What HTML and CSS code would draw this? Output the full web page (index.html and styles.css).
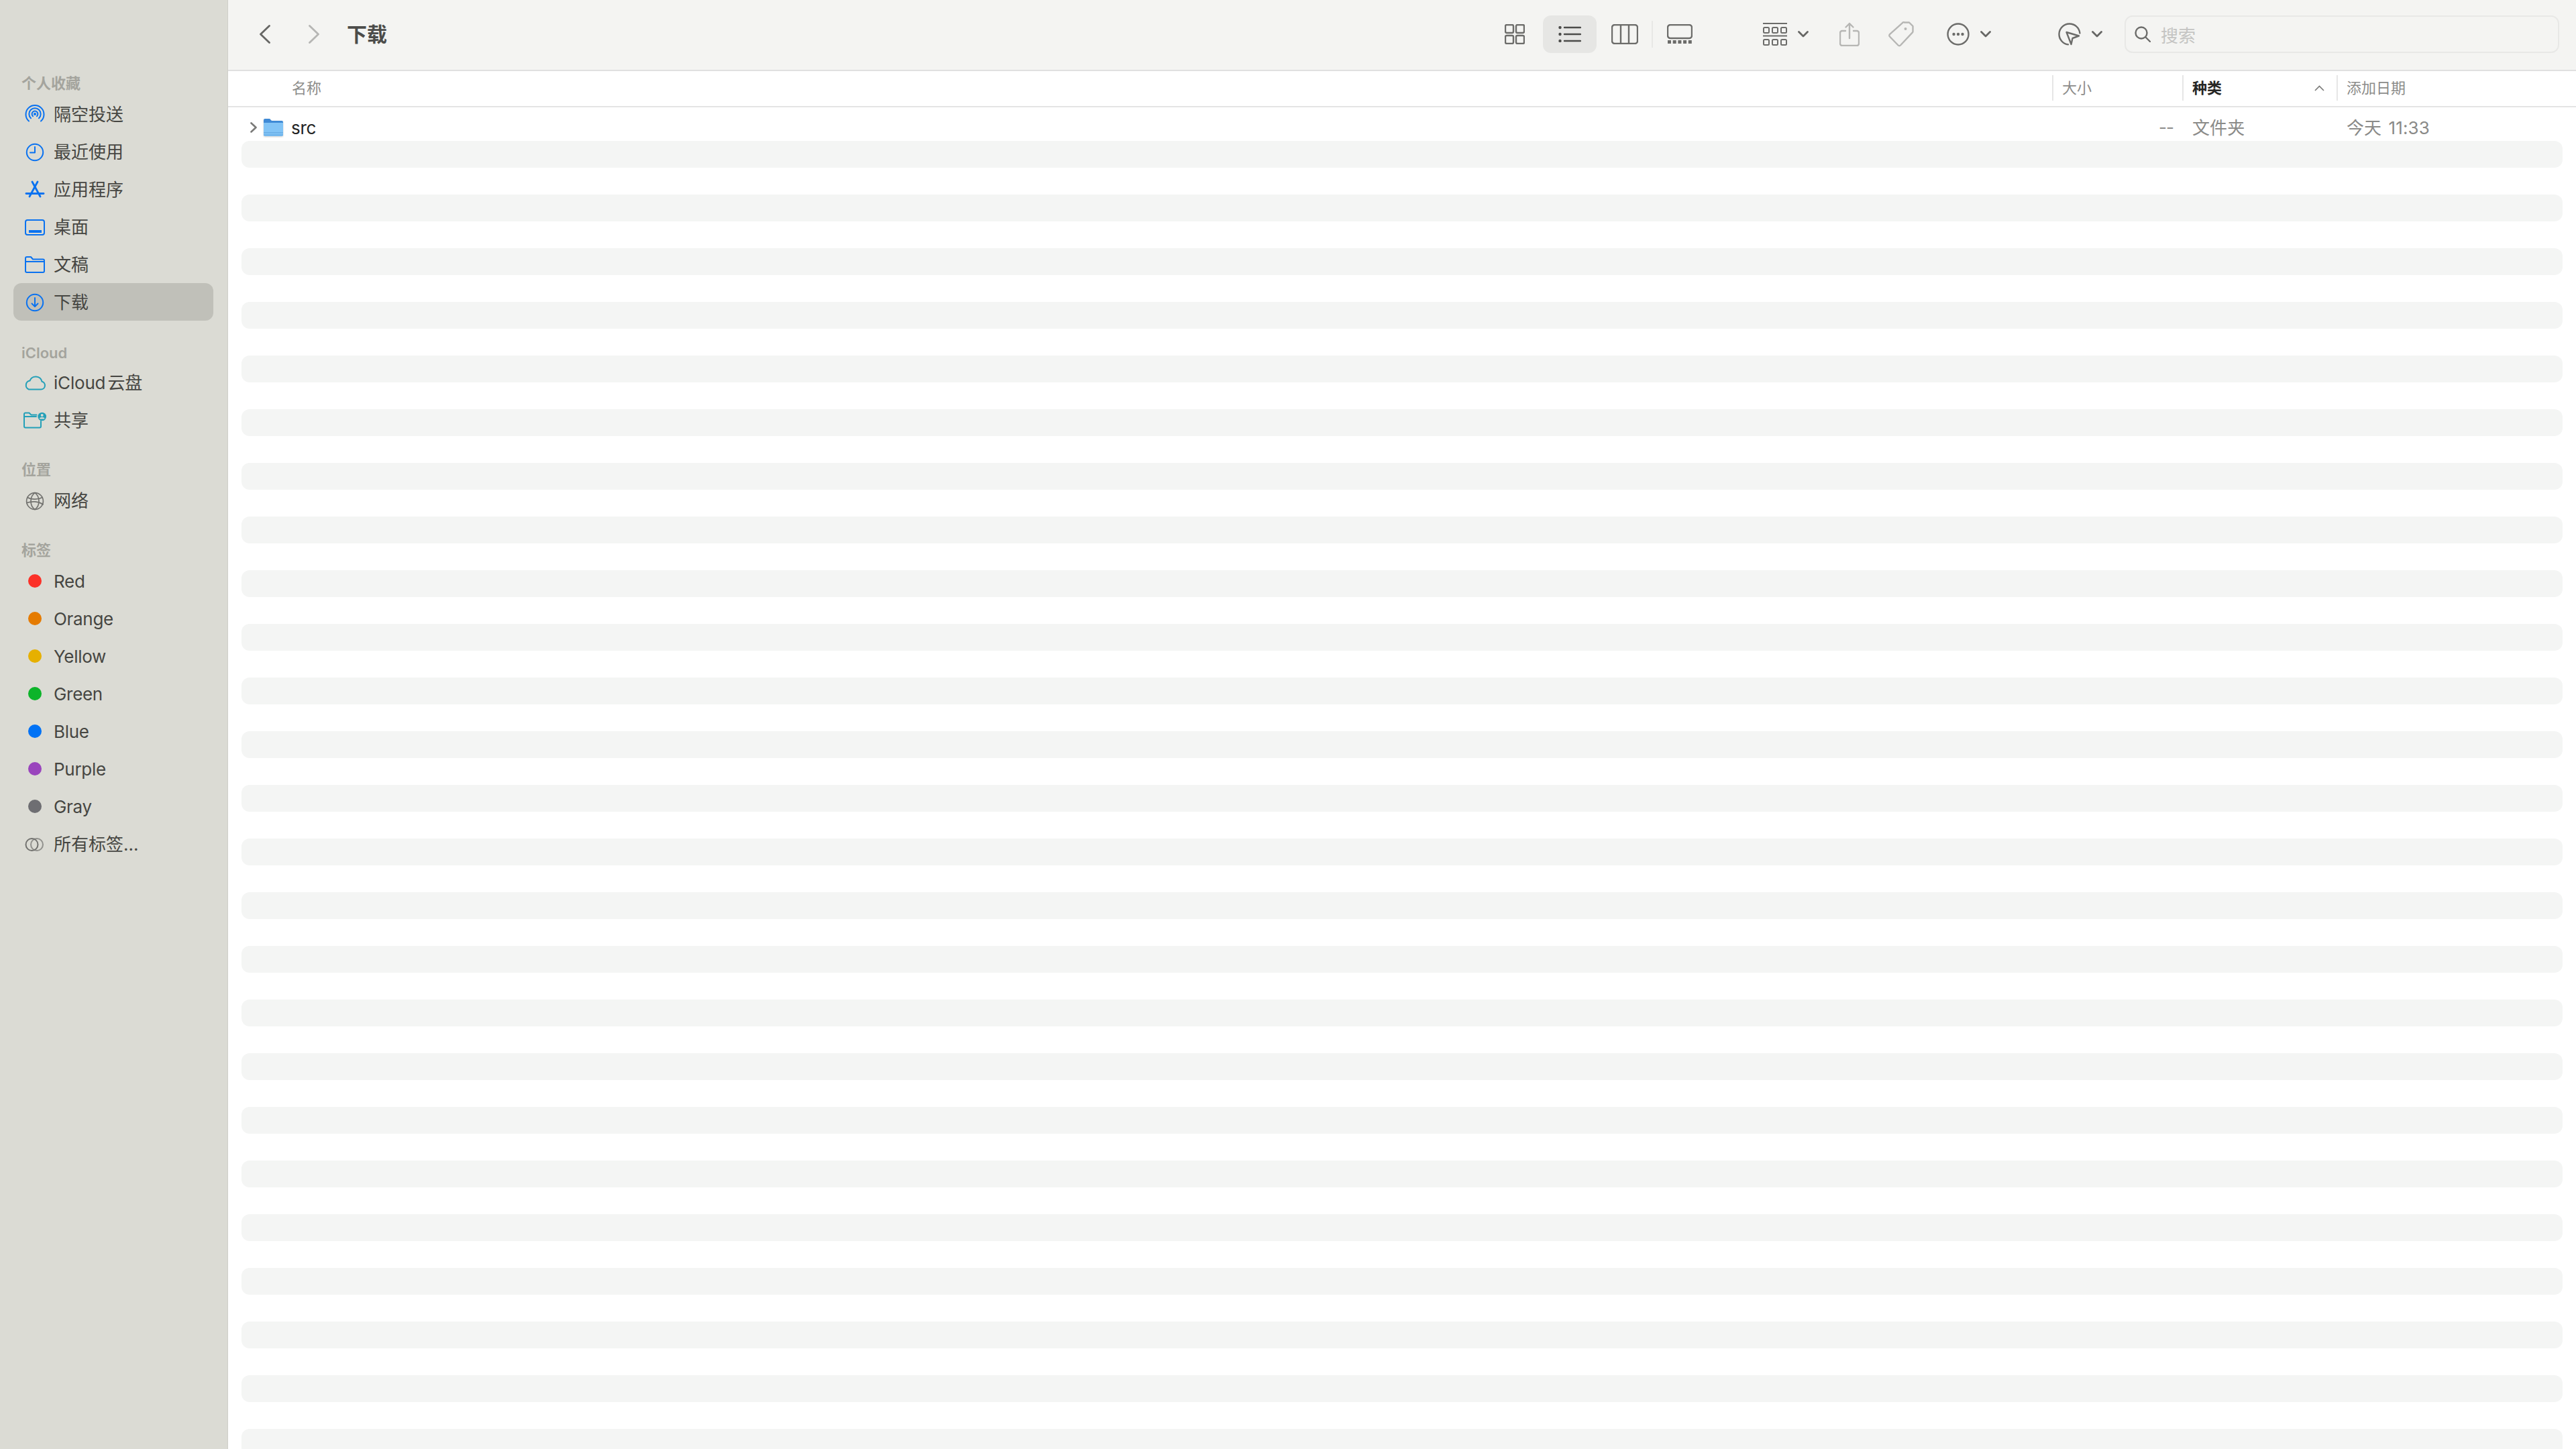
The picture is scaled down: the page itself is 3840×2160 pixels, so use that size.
FILE: index.html
```html
<!DOCTYPE html>
<html lang="zh-CN">
<head>
  <meta charset="UTF-8">
  <meta name="viewport" content="width=device-width, initial-scale=1.0">
  <title>下载</title>
  <link rel="stylesheet" href="styles.css">
</head>
<body>
  <div class="window">
    <aside class="sidebar">
      <section class="side-section">
        <h3 class="side-label">个人收藏</h3>
        <div class="side-item">
          <svg class="side-icon blue" viewBox="0 0 40 40"><path d="M11 30.5A13.5 13.5 0 1 1 29 30.5"/><path d="M14 26.2A8.7 8.7 0 1 1 26 26.2"/><path d="M17 23.2A4.4 4.4 0 1 1 23 23.2"/><circle class="solid" cx="20" cy="20" r="2"/></svg>
          <span class="zh">隔空投送</span>
        </div>
        <div class="side-item">
          <svg class="side-icon blue" viewBox="0 0 40 40"><circle cx="20" cy="21" r="12.2"/><path d="M20 13V21.5H13"/></svg>
          <span class="zh">最近使用</span>
        </div>
        <div class="side-item">
          <svg class="side-icon blue thick" viewBox="0 0 40 40"><path d="M16 9L28 31"/><path d="M24 9L12 31"/><path d="M7 26.5H33"/></svg>
          <span class="zh">应用程序</span>
        </div>
        <div class="side-item">
          <svg class="side-icon blue" viewBox="0 0 40 40"><rect x="6" y="10" width="28" height="22" rx="3"/><rect class="solid" x="11" y="25" width="19" height="4"/></svg>
          <span class="zh">桌面</span>
        </div>
        <div class="side-item">
          <svg class="side-icon blue" viewBox="0 0 40 40"><path d="M6 16V11a2 2 0 0 1 2-2h6l3 3.5h15a2 2 0 0 1 2 2V30a2 2 0 0 1-2 2H8a2 2 0 0 1-2-2V16H34"/></svg>
          <span class="zh">文稿</span>
        </div>
        <div class="side-item active">
          <svg class="side-icon blue" viewBox="0 0 40 40"><circle cx="20" cy="21" r="12.2"/><path d="M20 14V27"/><path d="M15.5 22.5L20 27L24.5 22.5"/></svg>
          <span class="zh">下载</span>
        </div>
      </section>

      <section class="side-section">
        <h3 class="side-label latin">iCloud</h3>
        <div class="side-item">
          <svg class="side-icon teal" viewBox="0 0 40 40"><path d="M11 30.5h18a6 6 0 0 0 1.5-11.8A9.5 9.5 0 0 0 12.5 17.5 6.8 6.8 0 0 0 11 30.5z"/></svg>
          <span class="zh mixed">iCloud 云盘</span>
        </div>
        <div class="side-item">
          <svg class="side-icon teal" viewBox="0 0 40 40"><path d="M4 15V11a2 2 0 0 1 1.500-1.500h6l3 3h8M4 15V29.500a2 2 0 0 0 2 2H27a2 2 0 0 0 2-2V22M4 15H22"/><circle class="solid" cx="30.700" cy="15" r="6.300"/><circle class="cut" cx="30.700" cy="13" r="2"/><path class="cut" d="M27 18.500a3.700 2.400 0 0 1 7.400 0z"/></svg>
          <span class="zh">共享</span>
        </div>
      </section>

      <section class="side-section">
        <h3 class="side-label">位置</h3>
        <div class="side-item">
          <svg class="side-icon gray thin" viewBox="0 0 40 40"><circle cx="20" cy="21" r="12.400"/><path d="M20 8.600C12 14 12 28 20 33.400"/><path d="M20 8.600C28 14 28 28 20 33.400"/><path d="M9 15.500C15 19 25 19 31 15.500"/><path d="M8 23.500C15 21 25 21 32 26"/></svg>
          <span class="zh">网络</span>
        </div>
      </section>

      <section class="side-section">
        <h3 class="side-label">标签</h3>
        <div class="side-item"><i class="dot dot-red"></i><span>Red</span></div>
        <div class="side-item"><i class="dot dot-orange"></i><span>Orange</span></div>
        <div class="side-item"><i class="dot dot-yellow"></i><span>Yellow</span></div>
        <div class="side-item"><i class="dot dot-green"></i><span>Green</span></div>
        <div class="side-item"><i class="dot dot-blue"></i><span>Blue</span></div>
        <div class="side-item"><i class="dot dot-purple"></i><span>Purple</span></div>
        <div class="side-item"><i class="dot dot-gray"></i><span>Gray</span></div>
        <div class="side-item">
          <svg class="side-icon gray" viewBox="0 0 40 40"><circle class="faded" cx="23" cy="21" r="9"/><circle cx="15.500" cy="21" r="9"/></svg>
          <span class="zh">所有标签...</span>
        </div>
      </section>
    </aside>

    <main class="main">
      <header class="toolbar">
        <svg class="nav-back" width="16" height="28" viewBox="0 0 16 28"><path d="M14.500 1.500L1.500 14L14.500 26.500"/></svg>
        <svg class="nav-forward" width="16" height="28" viewBox="0 0 16 28"><path d="M1.500 1.500L14.500 14L1.500 26.500"/></svg>
        <h1 class="title">下载</h1>

        <div class="views">
          <div class="view-btn">
            <svg class="tool-icon" width="30" height="30" viewBox="0 0 30 30"><rect x="1" y="1" width="12" height="12" rx="2"/><rect x="17" y="1" width="12" height="12" rx="2"/><rect x="1" y="17" width="12" height="12" rx="2"/><rect x="17" y="17" width="12" height="12" rx="2"/></svg>
          </div>
          <div class="view-btn selected">
            <svg class="tool-icon dark" width="34" height="24" viewBox="0 0 34 24"><circle class="solid" cx="2.500" cy="2" r="2.200"/><circle class="solid" cx="2.500" cy="12" r="2.200"/><circle class="solid" cx="2.500" cy="22" r="2.200"/><path d="M9 2H33M9 12H33M9 22H33"/></svg>
          </div>
          <div class="view-btn">
            <svg class="tool-icon" width="40" height="30" viewBox="0 0 40 30"><rect x="1" y="1" width="38" height="28" rx="4"/><path d="M14 1V29M26 1V29"/></svg>
          </div>
          <div class="view-sep"></div>
          <div class="view-btn">
            <svg class="tool-icon" width="38" height="30" viewBox="0 0 38 30"><rect x="1" y="1" width="36" height="20" rx="4"/><rect class="solid bare" x="1" y="24" width="5" height="5"/><rect class="solid bare" x="8.700" y="24" width="5" height="5"/><rect class="solid bare" x="16.400" y="24" width="5" height="5"/><rect class="solid bare" x="24.100" y="24" width="5" height="5"/><rect class="solid bare" x="31.800" y="24" width="5" height="5"/></svg>
          </div>
        </div>

        <div class="tool group-by">
          <svg class="tool-icon fine" width="36" height="34" viewBox="0 0 36 34"><path d="M0 1H36M0 19.500H36"/><rect x="1" y="7" width="8" height="8" rx="1.500"/><rect x="14" y="7" width="8" height="8" rx="1.500"/><rect x="27" y="7" width="8" height="8" rx="1.500"/><rect x="1" y="25" width="8" height="8" rx="1.500"/><rect x="14" y="25" width="8" height="8" rx="1.500"/><rect x="27" y="25" width="8" height="8" rx="1.500"/></svg>
          <svg class="chev" width="16" height="10" viewBox="0 0 16 10"><path d="M1.500 1.500L8 8L14.500 1.500"/></svg>
        </div>

        <svg class="tool-icon off share" width="30" height="36" viewBox="0 0 30 36"><path d="M9 13H4a3 3 0 0 0-3 3v16a3 3 0 0 0 3 3h22a3 3 0 0 0 3-3V16a3 3 0 0 0-3-3h-5"/><path d="M15 24V2M9.500 7.500L15 2L20.500 7.500"/></svg>
        <svg class="tool-icon off tag" width="38" height="38" viewBox="0 0 38 38"><path d="M24 1.500H31L36.500 7V15a2 2 0 0 1-.6 1.400L18 35.500a2.400 2.400 0 0 1-3.400 0L2 22.500a2.400 2.400 0 0 1 0-3.400L21 2.200a2 2 0 0 1 3-.7Z"/><circle class="solid bare" cx="25.500" cy="11" r="2"/></svg>

        <div class="tool more">
          <svg class="tool-icon" width="34" height="34" viewBox="0 0 34 34"><circle cx="17" cy="17" r="15.500"/><circle class="solid bare" cx="10.500" cy="17" r="2.200"/><circle class="solid bare" cx="17" cy="17" r="2.200"/><circle class="solid bare" cx="23.500" cy="17" r="2.200"/></svg>
          <svg class="chev" width="16" height="10" viewBox="0 0 16 10"><path d="M1.500 1.500L8 8L14.500 1.500"/></svg>
        </div>

        <div class="tool airdrop">
          <svg class="tool-icon" width="34" height="34" viewBox="0 0 34 34"><path d="M32.400 15.500A15.500 15.500 0 1 0 15 32.400"/><path d="M12.500 14L31 19.500L21.500 23L19.500 32Z"/></svg>
          <svg class="chev" width="16" height="10" viewBox="0 0 16 10"><path d="M1.500 1.500L8 8L14.500 1.500"/></svg>
        </div>

        <div class="search">
          <svg class="tool-icon" width="24" height="24" viewBox="0 0 24 24"><circle cx="10" cy="10" r="8.500"/><path d="M16.500 16.500L23 23"/></svg>
          <span class="search-text">搜索</span>
        </div>
      </header>

      <div class="table-head">
        <div class="head-cell head-name"><span class="head-text">名称</span></div>
        <div class="head-cell"><span class="head-text">大小</span></div>
        <div class="head-cell head-sorted">
          <span class="head-text">种类</span>
          <svg class="caret" width="15" height="9" viewBox="0 0 15 9"><path d="M1 8L7.500 1.500L14 8"/></svg>
        </div>
        <div class="head-cell"><span class="head-text">添加日期</span></div>
      </div>

      <div class="list">
        <div class="file-row">
          <div class="file-name">
            <svg class="disclosure" width="10" height="16" viewBox="0 0 10 16"><path d="M1.500 1.500L8.500 8L1.500 14.500"/></svg>
            <svg class="folder" width="29" height="28" viewBox="0 0 29 28">
              <path fill="#3f8ad6" d="M0 3a2 2 0 0 1 2-2h7l3 3h15a2 2 0 0 1 2 2v6H0z"/>
              <path fill="#82c4f6" d="M0 7h29v18a2 2 0 0 1-2 2H2a2 2 0 0 1-2-2z"/>
              <path fill="#6aaee6" d="M0 21h29v1.500H0zM0 24.500h29V26H0z"/>
            </svg>
            <span>src</span>
          </div>
          <div class="file-size">--</div>
          <div class="file-meta"><span class="meta-text">文件夹</span></div>
          <div class="file-meta"><span class="meta-text">今天 11:33</span></div>
        </div>
        <div class="stripe"></div><div class="stripe"></div><div class="stripe"></div><div class="stripe"></div><div class="stripe"></div>
        <div class="stripe"></div><div class="stripe"></div><div class="stripe"></div><div class="stripe"></div><div class="stripe"></div>
        <div class="stripe"></div><div class="stripe"></div><div class="stripe"></div><div class="stripe"></div><div class="stripe"></div>
        <div class="stripe"></div><div class="stripe"></div><div class="stripe"></div><div class="stripe"></div><div class="stripe"></div>
        <div class="stripe"></div><div class="stripe"></div><div class="stripe"></div><div class="stripe"></div><div class="stripe"></div>
      </div>
    </main>
  </div>
</body>
</html>
```

FILE: styles.css
```css
* {
  box-sizing: border-box;
}

body {
  margin: 0;
  font-family: Inter, "Noto Sans CJK SC", sans-serif;
  background: #fff;
}

svg {
  display: block;
  flex: none;
  fill: none;
}

.window {
  display: flex;
  height: 100vh;
  overflow: hidden;
}

/* sidebar */
.sidebar {
  width: 340px;
  flex: none;
  padding: 106px 21px 0 20px;
  background: #dbdbd4;
  border-right: 1px solid #cfcfc9;
}

.side-section {
  margin-bottom: 28px;
}

.side-label {
  margin: 0;
  padding-left: 12px;
  height: 36px;
  line-height: 36px;
  font-size: 22px;
  font-weight: 600;
  color: #a4a49d;
}

.side-label.latin {
  padding-top: 2px;
}

.side-item {
  display: flex;
  align-items: center;
  height: 56px;
  padding-left: 12px;
  border-radius: 12px;
  font-size: 26px;
  letter-spacing: -0.3px;
  color: #464642;
}

.side-item .zh {
  padding-bottom: 3px;
  letter-spacing: 0;
}

.side-item .mixed {
  word-spacing: -4px;
  letter-spacing: -0.2px;
}

.side-item.active {
  background: #c0c0b9;
}

.side-icon {
  width: 40px;
  height: 40px;
  margin-right: 8px;
  stroke-width: 2;
  stroke-linecap: round;
  stroke-linejoin: round;
}

.side-icon .solid {
  stroke: none;
}

.side-icon .cut {
  fill: #dbdbd4;
  stroke: none;
}

.side-icon.thick {
  stroke-width: 2.8;
}

.side-icon.thin {
  stroke-width: 1.7;
}

.side-icon .faded {
  opacity: 0.7;
}

.blue {
  stroke: #0a72f0;
}

.blue .solid {
  fill: #0a72f0;
}

.teal {
  stroke: #24a0b8;
}

.teal .solid {
  fill: #24a0b8;
}

.gray {
  stroke: #72726f;
}

.dot {
  width: 20px;
  height: 20px;
  margin: 0 18px 0 10px;
  border-radius: 50%;
  flex: none;
}

.dot-red { background: #fb3128; }
.dot-orange { background: #e57b00; }
.dot-yellow { background: #e6b000; }
.dot-green { background: #0db42a; }
.dot-blue { background: #0072f5; }
.dot-purple { background: #9a45bd; }
.dot-gray { background: #6e6e72; }

/* main */
.main {
  flex: 1;
  min-width: 0;
}

.toolbar {
  display: flex;
  align-items: center;
  height: 106px;
  padding: 0 25px 2px 47px;
  background: #f4f4f2;
  border-bottom: 2px solid #e0e0e0;
}

.nav-back,
.nav-forward {
  stroke-width: 2.8;
  stroke-linecap: round;
  stroke-linejoin: round;
}

.nav-back {
  stroke: #666664;
}

.nav-forward {
  margin-left: 57px;
  stroke: #b6b6b4;
}

.title {
  margin: 0 0 4px 41px;
  font-size: 30px;
  font-weight: 700;
  color: #4c4c4a;
}

.views {
  display: flex;
  align-items: center;
  gap: 2px;
  margin-left: auto;
}

.view-btn {
  display: flex;
  align-items: center;
  justify-content: center;
  width: 80px;
  height: 56px;
  border-radius: 12px;
}

.view-btn.selected {
  background: #e6e6e4;
}

.view-sep {
  width: 2px;
  height: 40px;
  margin: 0 -2px;
  background: #e8e8e6;
}

.tool-icon {
  stroke: #6c6c6a;
  stroke-width: 2.4;
  stroke-linecap: round;
  stroke-linejoin: round;
}

.tool-icon .solid {
  fill: #4c4c4a;
  stroke: none;
}

.tool-icon .bare {
  fill: #6c6c6a;
}

.tool-icon.dark {
  stroke: #4c4c4a;
}

.tool-icon.fine {
  stroke-width: 2;
}

.tool-icon.off {
  stroke: #b6b6b4;
}

.tool-icon.off .bare {
  fill: #b6b6b4;
}

.tool {
  display: flex;
  align-items: center;
  gap: 16px;
}

.chev {
  stroke: #666664;
  stroke-width: 2.8;
  stroke-linecap: round;
  stroke-linejoin: round;
}

.group-by {
  margin-left: 84px;
}

.share {
  margin-left: 46px;
}

.tag {
  margin-left: 43px;
}

.more {
  margin-left: 49px;
}

.airdrop {
  margin-left: 100px;
}

.search {
  display: flex;
  align-items: center;
  gap: 15px;
  width: 648px;
  height: 56px;
  margin-left: 33px;
  padding-left: 13px;
  border: 2px solid #e8e8e6;
  border-radius: 12px;
}

.search-text {
  font-size: 26px;
  color: #c4c4c2;
}

/* table */
.table-head,
.file-row {
  display: grid;
  grid-template-columns: 1fr 194px 230px 357px;
}

.table-head {
  align-items: center;
  height: 54px;
  padding-bottom: 2px;
  background: #fff;
  border-bottom: 2px solid #e4e4e4;
}

.head-cell {
  display: flex;
  align-items: center;
  justify-content: space-between;
  height: 38px;
  padding: 0 18px 0 13px;
  border-left: 2px solid #e6e6e6;
  font-size: 22px;
  color: #8c8c8a;
}

.head-text {
  margin-bottom: 4px;
}

.head-name {
  padding-left: 95px;
  border-left: none;
}

.head-sorted {
  font-weight: 700;
  color: #262624;
}

.caret {
  stroke: #7a7a78;
  stroke-width: 1.6;
}

.list {
  background: #fff;
}

.file-row {
  height: 50px;
  padding-top: 10px;
  align-items: center;
  font-size: 26px;
  color: #8a8a88;
}

.file-name {
  display: flex;
  align-items: center;
  padding-left: 33px;
  color: #242424;
  letter-spacing: -0.3px;
}

.disclosure {
  margin-right: 10px;
  stroke: #7a7a78;
  stroke-width: 2.6;
  stroke-linecap: round;
  stroke-linejoin: round;
}

.folder {
  margin-right: 12px;
  filter: drop-shadow(0 1px 1px rgba(0, 0, 0, 0.2));
}

.file-size {
  padding: 0 13px 1px 0;
  text-align: right;
  letter-spacing: -1px;
}

.file-meta {
  display: flex;
  padding-left: 15px;
}

.meta-text {
  padding-bottom: 3px;
  word-spacing: 3px;
  letter-spacing: 0.1px;
}

.stripe {
  height: 40px;
  margin: 0 20px 40px;
  border-radius: 12px;
  background: #f4f5f4;
}
```
